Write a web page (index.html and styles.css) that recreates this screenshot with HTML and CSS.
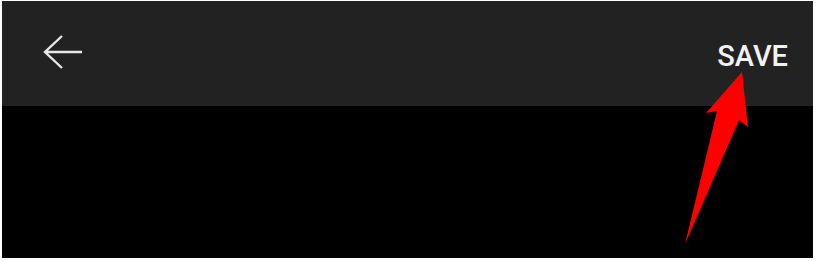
FILE: index.html
```html
<!DOCTYPE html>
<html>
<head>
  <meta charset="utf-8">
  <title>Edit</title>
<link rel="stylesheet" href="styles.css">
</head>
<body>
  <div class="screen">
    <div class="toolbar">
      <svg class="back" width="40" height="36" viewBox="0 0 40 36">
        <path d="M2 17 H39 M19 1 L2 17 L19 33" fill="none" stroke="#e8e8e8" stroke-width="2.4"/>
      </svg>
      <span class="save">SAVE</span>
    </div>
    <div class="content"></div>
    <svg class="pointer" width="816" height="261" viewBox="0 0 816 261">
      <polygon points="742,72 748,127 739,120 685,244 717,111 706,113" fill="#ff0000"/>
    </svg>
  </div>
</body>
</html>
```

FILE: styles.css
```css
html, body {
  margin: 0;
  background: #fff;
}

.screen {
  position: relative;
  margin: 1px 3px 0 2px;
  height: 257px;
  background: #000;
}

.toolbar {
  height: 105px;
  background: #222222;
  display: flex;
  align-items: center;
  justify-content: space-between;
  padding: 0 25px 0 41px;
  font-family: Roboto, "Liberation Sans", sans-serif;
}

.back {
  display: block;
  margin-top: -1px;
}

.save {
  color: #f2f2f2;
  font-size: 29px;
  font-weight: 500;
  margin-top: 4px;
}

.pointer {
  position: absolute;
  left: -2px;
  top: -1px;
  pointer-events: none;
}
```
